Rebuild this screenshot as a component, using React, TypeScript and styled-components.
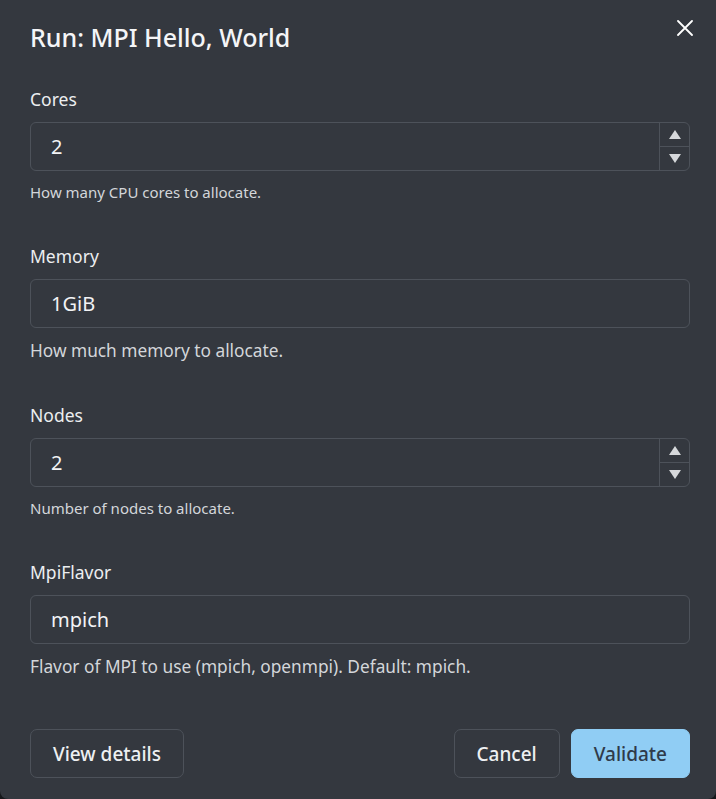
import React, { useState } from 'react';
import styled, { createGlobalStyle } from 'styled-components';

const GlobalStyle = createGlobalStyle`
  html, body {
    margin: 0;
    padding: 0;
    background: #16181b;
  }
  body {
    font-family: "Noto Sans", "Open Sans", sans-serif;
  }
  * {
    box-sizing: border-box;
  }
`;

const Dialog = styled.div`
  width: 716px;
  height: 799px;
  background: #34383f;
  border-radius: 0 0 8px 8px;
  color: #eef0f2;
  display: flex;
  flex-direction: column;
  padding: 21px 26px 21px 30px;
`;

const Header = styled.div`
  display: flex;
  justify-content: space-between;
  align-items: flex-start;
`;

const Title = styled.h2`
  margin: 0;
  font-size: 25px;
  line-height: 32px;
  font-weight: 500;
  color: #f4f5f7;
`;

const CloseButton = styled.button`
  width: 24px;
  height: 24px;
  margin: -5px -7px 0 0;
  padding: 0;
  border: none;
  background: transparent;
  color: #ffffff;
  display: flex;
  align-items: center;
  justify-content: center;
  cursor: pointer;
`;

const Body = styled.div`
  display: flex;
  flex-direction: column;
  gap: 40px;
  margin-top: 34px;
`;

const Field = styled.div`
  display: flex;
  flex-direction: column;
`;

const Label = styled.label`
  font-size: 17.5px;
  line-height: 24px;
  font-weight: 400;
  color: #eceef0;
  margin-bottom: 11px;
`;

const InputBox = styled.div`
  display: flex;
  height: 49px;
  border: 1px solid #4d525a;
  border-radius: 6px;
  overflow: hidden;
`;

const TextInput = styled.input`
  flex: 1;
  min-width: 0;
  border: none;
  outline: none;
  background: transparent;
  color: #f2f3f5;
  font-family: inherit;
  font-size: 20px;
  padding: 0 20px;
`;

const Stepper = styled.div`
  width: 30px;
  display: flex;
  flex-direction: column;
  border-left: 1px solid #4d525a;
`;

const StepButton = styled.button<{ $down?: boolean }>`
  flex: 1;
  border: none;
  padding: 0;
  background: transparent;
  display: flex;
  align-items: center;
  justify-content: center;
  cursor: pointer;
  border-top: ${(p) => (p.$down ? '1px solid #4d525a' : 'none')};
  &::after {
    content: '';
    width: 0;
    height: 0;
    border-left: 6.5px solid transparent;
    border-right: 6.5px solid transparent;
    ${(p) =>
      p.$down
        ? 'border-top: 9px solid #d6d8db;'
        : 'border-bottom: 9px solid #d6d8db;'}
  }
`;

const Help = styled.p<{ $small?: boolean }>`
  margin: 10px 0 0;
  font-size: ${(p) => (p.$small ? '15px' : '17.3px')};
  line-height: 1.5;
  color: #d3d6da;
`;

const Footer = styled.div`
  margin-top: auto;
  display: flex;
  align-items: center;
  gap: 11px;
`;

const Spacer = styled.div`
  flex: 1;
`;

const Button = styled.button<{ $primary?: boolean }>`
  height: 49px;
  padding: 0 22px;
  border-radius: 7px;
  font-family: inherit;
  font-size: 19px;
  font-weight: 500;
  cursor: pointer;
  border: 1px solid ${(p) => (p.$primary ? '#90cdf4' : '#4d525a')};
  background: ${(p) => (p.$primary ? '#90cdf4' : 'transparent')};
  color: ${(p) => (p.$primary ? '#2f3a4a' : '#eef0f2')};
`;

type FieldDef = {
  name: string;
  value: string;
  help: string;
  numeric?: boolean;
};

const fields: FieldDef[] = [
  { name: 'Cores', value: '2', help: 'How many CPU cores to allocate.', numeric: true },
  { name: 'Memory', value: '1GiB', help: 'How much memory to allocate.' },
  { name: 'Nodes', value: '2', help: 'Number of nodes to allocate.', numeric: true },
  { name: 'MpiFlavor', value: 'mpich', help: 'Flavor of MPI to use (mpich, openmpi). Default: mpich.' },
];

const FormField = ({ def }: { def: FieldDef }) => {
  const [value, setValue] = useState(def.value);
  const step = (d: number) => {
    const n = parseInt(value, 10) || 0;
    setValue(String(Math.max(0, n + d)));
  };
  return (
    <Field>
      <Label>{def.name}</Label>
      <InputBox>
        <TextInput value={value} onChange={(e) => setValue(e.target.value)} />
        {def.numeric && (
          <Stepper>
            <StepButton onClick={() => step(1)} aria-label="increment" />
            <StepButton $down onClick={() => step(-1)} aria-label="decrement" />
          </Stepper>
        )}
      </InputBox>
      <Help $small={def.numeric}>{def.help}</Help>
    </Field>
  );
};

const App = () => {
  return (
    <>
      <GlobalStyle />
      <Dialog>
        <Header>
          <Title>Run: MPI Hello, World</Title>
          <CloseButton aria-label="close">
            <svg width="16" height="16" viewBox="0 0 16 16">
              <path d="M1 1 L15 15 M15 1 L1 15" stroke="currentColor" strokeWidth="1.8" strokeLinecap="round" />
            </svg>
          </CloseButton>
        </Header>
        <Body>
          {fields.map((f) => (
            <FormField key={f.name} def={f} />
          ))}
        </Body>
        <Footer>
          <Button>View details</Button>
          <Spacer />
          <Button>Cancel</Button>
          <Button $primary>Validate</Button>
        </Footer>
      </Dialog>
    </>
  );
};

export default App;
